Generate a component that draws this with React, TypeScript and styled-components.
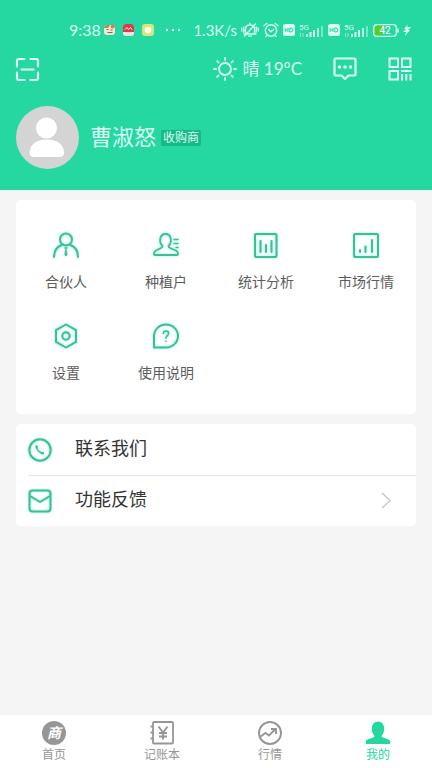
import React from "react";
import styled, { createGlobalStyle } from "styled-components";

const GREEN = "#25d7a0";
const LINE_GREEN = "#3fbd98";
const PALE = "#d9fff5";

const GlobalStyle = createGlobalStyle`
  *, *::before, *::after { box-sizing: border-box; }
  body {
    margin: 0;
    background: #f5f5f5;
    font-family: Roboto, "Noto Sans CJK SC", sans-serif;
  }
  button {
    margin: 0;
    padding: 0;
    border: 0;
    background: none;
    color: inherit;
    font: inherit;
    cursor: pointer;
  }
  svg { display: block; flex: none; }
`;

const Page = styled.div`
  display: flex;
  flex-direction: column;
  min-height: 100vh;
`;

const Header = styled.header`
  padding-bottom: 21px;
  background: ${GREEN};
  color: ${PALE};
`;

const StatusBar = styled.div`
  display: flex;
  align-items: center;
  justify-content: space-between;
  height: 44px;
  padding: 16px 21px 0 69px;
  font-family: Lato, sans-serif;
  line-height: 20px;
`;

const StatusGroup = styled.div<{ $gap: number }>`
  display: flex;
  align-items: center;
  gap: ${(p) => p.$gap}px;
`;

const Clock = styled.time`
  font-size: 16px;
`;

const Speed = styled.span`
  font-size: 15px;
`;

const ToolBar = styled.div`
  display: flex;
  align-items: center;
  height: 50px;
  padding: 0 20px 0 15px;
`;

const Weather = styled.div`
  display: flex;
  align-items: center;
  gap: 6px;
  margin-left: auto;
  font-family: Lato, "Noto Sans CJK SC", sans-serif;
  font-size: 17px;
  line-height: 24px;
`;

const ToolButton = styled.button<{ $space?: number }>`
  margin-left: ${(p) => p.$space ?? 0}px;
`;

const Profile = styled.div`
  display: flex;
  align-items: center;
  padding: 12px 16px 0;
`;

const UserName = styled.h1`
  margin: 0 5px 0 11px;
  font-size: 22px;
  font-weight: 400;
  line-height: 32px;
`;

const Role = styled.span`
  padding: 0 2px;
  border-radius: 2px;
  background: #17b988;
  font-size: 12px;
  line-height: 16px;
`;

const Main = styled.main`
  display: flex;
  flex: 1;
  flex-direction: column;
  gap: 10px;
  padding: 10px 16px;
`;

const Card = styled.section`
  border-radius: 5px;
  background: #fff;
`;

const FeatureGrid = styled(Card)`
  display: grid;
  grid-template-columns: repeat(4, 1fr);
  row-gap: 30px;
  padding: 31px 0;
`;

const Feature = styled.button`
  display: flex;
  flex-direction: column;
  align-items: center;
  gap: 13px;
  color: #5c5c5c;
  font-size: 14px;
  line-height: 20px;
`;

const Glow = styled.svg`
  fill: none;
  stroke: ${LINE_GREEN};
  stroke-width: 2;
  stroke-linecap: round;
  stroke-linejoin: round;
  filter: drop-shadow(0 0 1px #7df5d2);
`;

const ContactRow = styled.button`
  display: flex;
  align-items: center;
  width: 100%;
  height: 51px;
  padding-left: 12px;
  color: #333;
  font-size: 18px;
  line-height: 24px;
  text-align: left;
`;

const ContactBody = styled.span`
  flex: 1;
  padding: 0 0 2px 23px;
`;

const Divider = styled.hr`
  height: 1px;
  margin: 0 0 -1px 12px;
  border: 0;
  background: #e6e6e6;
`;

const Chevron = styled.svg`
  margin-right: 25px;
`;

const TabBar = styled.nav`
  display: grid;
  grid-template-columns: repeat(4, 1fr);
  align-items: start;
  height: 53px;
  padding-top: 5px;
  background: #fff;
`;

const Tab = styled.button<{ $active?: boolean }>`
  display: flex;
  flex-direction: column;
  align-items: center;
  color: ${(p) => (p.$active ? GREEN : "#969696")};
  font-size: 12px;
  line-height: 18px;
`;

const LogoMark = styled.span`
  display: flex;
  align-items: center;
  justify-content: center;
  width: 24px;
  height: 24px;
  margin: 1px;
  border-radius: 50%;
  background: #969696;
  color: #fff;
  font-size: 14px;
  font-style: italic;
  font-weight: 700;
`;

const HdIcon = () => (
  <svg width="12" height="12" viewBox="0 0 12 12" aria-hidden="true">
    <rect width="12" height="12" rx="2.5" fill={PALE} />
    <path d="M2.2 4v4M5 4v4M2.2 6H5M6.8 4v4h1q2 0 2-2t-2-2z" fill="none" stroke={GREEN} />
  </svg>
);

const SignalIcon = () => (
  <svg width="25" height="15" viewBox="0 0 25 15" aria-hidden="true">
    <text x="0" y="7" fontSize="8" fontFamily="Roboto, sans-serif" fill={PALE}>5G</text>
    <path d="M1.5 14v-4M4 10v4" stroke={PALE} strokeWidth="1" opacity=".55" />
    <path d="M8 14v-3M11.5 14V9M15 14V7" stroke={PALE} strokeWidth="2" />
    <path d="M19 14V5" stroke={PALE} strokeWidth="2" opacity=".75" />
    <path d="M23 14V3" stroke={PALE} strokeWidth="2" opacity=".45" />
  </svg>
);

const Status = () => (
  <StatusBar>
    <StatusGroup $gap={3}>
      <Clock>9:38</Clock>
      <svg width="50" height="14" viewBox="0 0 50 14" aria-hidden="true">
        <rect x="0" y="2" width="11" height="10" rx="3" fill="#f5e8cc" />
        <path d="M0 4q2-3 6-2l-2 3H0z" fill="#b98654" />
        <circle cx="8.7" cy="3.5" r="2" fill="#e27b4b" />
        <path d="M2.5 6.5h2M6.5 7h2M3.5 9.5h5" stroke="#77684f" />
        <rect x="19" y="1" width="11" height="12" rx="3" fill="#f5e5df" />
        <path d="M19 9V4q0-3 3-3h5q3 0 3 3v5z" fill="#da3b49" />
        <path d="M21 6.5l2-2 1.5 2 2-2 1.5 2" stroke="#fff" fill="none" />
        <rect x="38" y="1" width="12" height="12" rx="3" fill="#d8e483" />
        <circle cx="44" cy="7" r="3.3" fill="#fffceb" />
      </svg>
      <svg width="24" height="4" viewBox="0 0 24 4" fill={PALE} aria-hidden="true">
        <circle cx="10" cy="2" r="1.2" />
        <circle cx="16" cy="2" r="1.2" />
        <circle cx="22" cy="2" r="1.2" />
      </svg>
    </StatusGroup>
    <StatusGroup $gap={4}>
      <Speed>1.3K/s</Speed>
      <svg width="18" height="16" viewBox="0 0 18 16" fill="none" stroke={PALE} strokeWidth="1.3" strokeLinecap="round" aria-hidden="true">
        <path d="M4.5 12V7q0-4 4.5-4t4.5 4v5zM3 12h12M7.5 14.2h3M9 1.3V3M3.5 14L14.5 2M2.8 5v5M.8 6v3M15.2 5v5M17.2 6v3" />
      </svg>
      <svg width="16" height="16" viewBox="0 0 16 16" fill="none" stroke={PALE} strokeWidth="1.4" strokeLinecap="round" aria-hidden="true">
        <circle cx="8" cy="8.5" r="5.7" />
        <path d="M1 3.8L3.8 1.5M15 3.8l-2.8-2.3M5.7 7.5L8 9.7l2.7-2.2M4 13.3l-1 1.2M12 13.3l1 1.2" />
      </svg>
      <HdIcon />
      <SignalIcon />
      <HdIcon />
      <SignalIcon />
      <svg width="26" height="13" viewBox="0 0 26 13" aria-hidden="true">
        <path d="M3.5 1.5H10v10H3.5q-2 0-2-2v-6q0-2 2-2z" fill="#55cf27" />
        <rect x=".7" y=".7" width="22.6" height="11.6" rx="3" fill="none" stroke={PALE} strokeWidth="1.3" />
        <path d="M25 4.5v4" stroke={PALE} strokeWidth="1.5" />
        <text x="12" y="10.2" textAnchor="middle" fontSize="10" fontFamily="Roboto, sans-serif" fill="#fff">42</text>
      </svg>
      <svg width="8" height="12" viewBox="0 0 8 12" fill={PALE} aria-hidden="true">
        <path d="M5 0L1 5h2L0 8h3l-1 4 5-6H5l3-3H4z" />
      </svg>
    </StatusGroup>
  </StatusBar>
);

const ScanIcon = () => (
  <svg width="25" height="25" viewBox="0 0 25 25" fill="none" stroke={PALE} strokeWidth="2.2" strokeLinecap="round">
    <path d="M2 9.5V4q0-2 2-2h5.5M15.5 2H21q2 0 2 2v5.5M23 15.5V21q0 2-2 2h-5.5M9.5 23H4q-2 0-2-2v-5.5M6.5 12.5h12" />
  </svg>
);

const SunIcon = () => (
  <svg width="24" height="24" viewBox="0 0 24 24" fill="none" stroke={PALE} strokeWidth="1.8" strokeLinecap="round" aria-hidden="true">
    <circle cx="12" cy="12" r="6" />
    <path d="M12 1v2M12 21v2M1 12h2M21 12h2M4.2 4.2l1.4 1.4M18.4 18.4l1.4 1.4M4.2 19.8l1.4-1.4M18.4 5.6l1.4-1.4" />
  </svg>
);

const MessageIcon = () => (
  <svg width="24" height="24" viewBox="0 0 24 24" fill="none" stroke={PALE} strokeWidth="2.2" strokeLinejoin="round">
    <path d="M2.5 1.5h19q1 0 1 1v15q0 1-1 1h-6L12 22l-3.5-3.5h-6q-1 0-1-1v-15q0-1 1-1z" />
    <g fill={PALE} stroke="none">
      <circle cx="6.5" cy="10" r="1.8" />
      <circle cx="12" cy="10" r="1.8" />
      <circle cx="17.5" cy="10" r="1.8" />
    </g>
  </svg>
);

const CodeIcon = () => (
  <svg width="24" height="24" viewBox="0 0 24 24" fill="none" stroke={PALE} strokeWidth="2">
    <path d="M1.5 1.5H10V10H1.5zM14 1.5h8.5V10H14zM1.5 14H10v8.5H1.5zM13 14h10.5M14 17v6.5M18.3 17v6.5M22.5 17v6.5" />
  </svg>
);

const Avatar = () => (
  <svg width="63" height="63" viewBox="0 0 63 63" role="img" aria-label="头像">
    <circle cx="31.5" cy="31.5" r="31.5" fill="#d4d4d4" />
    <circle cx="30.5" cy="22" r="10.5" fill="#fff" />
    <path d="M13.5 47C13.5 38.5 21 33.500 30.500 33.500h.500C41 33.500 48 38.500 48 47q0 4-4.500 4H18q-4.500 0-4.500-4z" fill="#fff" />
  </svg>
);

const features: { label: string; art: React.ReactNode }[] = [
  {
    label: "合伙人",
    art: (
      <>
        <circle cx="14" cy="8.5" r="6" />
        <path d="M2 26q0-9 7.5-12M26 26q0-9-7.5-12" />
        <path d="M13 17h2" strokeWidth="1.5" />
        <path d="M14 18.5l1 5-1 1.500-1-1.500z" fill={LINE_GREEN} strokeWidth=".8" />
      </>
    ),
  },
  {
    label: "种植户",
    art: (
      <>
        <path d="M10.5 15C7 12 7 3 13.5 3S20 12 16.5 15q0 1.5 1.5 2l6 2.5q2 1 2 3.5 0 1-1 1H3q-1 0-1-1 0-2.500 2-3.500L9 17q1.500-.5 1.500-2z" strokeWidth="1.8" />
        <path d="M22 8.500h4M22 12.500h4M24 16.500h2" strokeWidth="1.5" />
      </>
    ),
  },
  {
    label: "统计分析",
    art: (
      <>
        <rect x="3" y="3" width="21.5" height="23" rx="1" />
        <path d="M8.5 10v11M14 14v7M19.5 10v11" />
      </>
    ),
  },
  {
    label: "市场行情",
    art: (
      <>
        <rect x="2" y="3" width="24" height="23" rx="1" />
        <path d="M8 19v2M13.5 15.5V21M20 9v12" />
      </>
    ),
  },
  {
    label: "设置",
    art: (
      <>
        <path d="M14 2.500l10 5.600v11.800l-10 5.600-10-5.600V8.100z" />
        <circle cx="14" cy="14" r="3.7" />
      </>
    ),
  },
  {
    label: "使用说明",
    art: (
      <>
        <path d="M2 25.500V14A12 11.500 0 1 1 14 25.500z" />
        <path d="M11.300 11.500q0-2.500 2.700-2.500t2.700 2.300c0 2-2.700 2.200-2.700 5M14 19.300v.1" strokeWidth="1.5" />
      </>
    ),
  },
];

export default function App() {
  return (
    <Page>
      <GlobalStyle />
      <Header>
        <Status />
        <ToolBar>
          <ToolButton aria-label="扫一扫"><ScanIcon /></ToolButton>
          <Weather><SunIcon /><span>晴 19°C</span></Weather>
          <ToolButton $space={31} aria-label="消息"><MessageIcon /></ToolButton>
          <ToolButton $space={31} aria-label="二维码"><CodeIcon /></ToolButton>
        </ToolBar>
        <Profile>
          <Avatar />
          <UserName>曹淑怒</UserName>
          <Role>收购商</Role>
        </Profile>
      </Header>
      <Main>
        <FeatureGrid>
          {features.map(({ label, art }) => (
            <Feature key={label}>
              <Glow width="28" height="28" viewBox="0 0 28 28" aria-hidden="true">{art}</Glow>
              {label}
            </Feature>
          ))}
        </FeatureGrid>
        <Card>
          <ContactRow>
            <Glow width="24" height="24" viewBox="0 0 24 24" aria-hidden="true">
              <circle cx="12" cy="12" r="10.7" />
              <path d="M8.5 8.5q.5 5.500 6.500 6.700" strokeWidth="1.5" />
              <path d="M8.500 8.500l.3 1M14 15.200h1" strokeWidth="2.2" />
            </Glow>
            <ContactBody>联系我们</ContactBody>
          </ContactRow>
          <Divider />
          <ContactRow>
            <Glow width="24" height="24" viewBox="0 0 24 24" aria-hidden="true">
              <rect x="1.5" y="1.5" width="21" height="21" rx="3" />
              <path d="M2 7l10 6 10-6" />
            </Glow>
            <ContactBody>功能反馈</ContactBody>
            <Chevron width="10" height="17" viewBox="0 0 10 17" fill="none" stroke="#c4c4c4" strokeWidth="1.3" aria-hidden="true">
              <path d="M1 1l8 7.500L1 16" />
            </Chevron>
          </ContactRow>
        </Card>
      </Main>
      <TabBar>
        <Tab>
          <LogoMark>商</LogoMark>
          首页
        </Tab>
        <Tab>
          <svg width="26" height="26" viewBox="0 0 26 26" fill="none" stroke="#969696" strokeWidth="1.8" aria-hidden="true">
            <rect x="4" y="2" width="20" height="21.5" rx="1" />
            <path d="M1.5 6.500H4M1.500 12.500H4M1.500 18.500H4M9.500 6.500l4.500 6 4.500-6M14 12.500v7M10 13h8M10 16.500h8" />
          </svg>
          记账本
        </Tab>
        <Tab>
          <svg width="26" height="26" viewBox="0 0 26 26" fill="none" stroke="#969696" strokeWidth="1.9" aria-hidden="true">
            <circle cx="13" cy="13" r="11" />
            <path d="M3 17l5.500-4 3.500 2.500L18.500 9M14 9h5v5" />
          </svg>
          行情
        </Tab>
        <Tab $active aria-current="page">
          <svg width="26" height="26" viewBox="0 0 26 26" fill={GREEN} aria-hidden="true">
            <path d="M9.500 16C5 11 6 1.500 13 1.500S21 11 16.500 16q0 1.200 2 1.800l4.500 1.500q2.500 1 2.500 3.200 0 1.500-1.500 1.500H2Q.5 24 .5 22.500q0-2.200 2.500-3.200l4.500-1.500q2-.6 2-1.800z" />
          </svg>
          我的
        </Tab>
      </TabBar>
    </Page>
  );
}
